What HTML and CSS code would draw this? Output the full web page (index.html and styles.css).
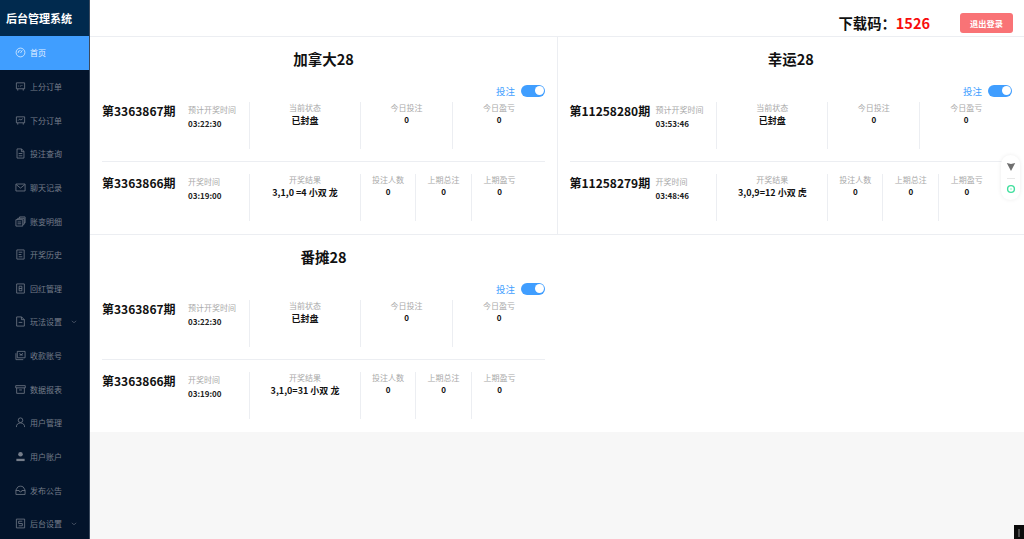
FILE: index.html
```html
<!DOCTYPE html>
<html lang="zh-CN">
<head>
<meta charset="utf-8">
<title>后台管理系统</title>
<link rel="stylesheet" href="styles.css">
</head>
<body>
<div class="app">
  <aside class="sidebar">
    <div class="logo">后台管理系统</div>
    <nav class="menu">
      <a class="item active"><svg class="ico" viewBox="0 0 12 12"><circle cx="6" cy="6" r="4.8"/><path d="M6 6.5 8 3.6M3.4 6.5a2.6 2.6 0 0 1 2.6-2.7"/></svg><span>首页</span></a>
      <a class="item"><svg class="ico" viewBox="0 0 12 12"><path d="M1.5 2h9v6.5h-9zM3 8.5V10.5M9 8.5V10.5M3.5 5.5h1M5.5 5.5h1M7.5 4.5v1"/></svg><span>上分订单</span></a>
      <a class="item"><svg class="ico" viewBox="0 0 12 12"><path d="M1.5 2h9v6.5h-9zM3 8.5V10.5M9 8.5V10.5M3.5 6l1.5-1.5 1.5 1 2-1.5"/></svg><span>下分订单</span></a>
      <a class="item"><svg class="ico" viewBox="0 0 12 12"><path d="M2.2 1h5l2.6 2.8V11H2.2zM7 1v3h2.8M4 6h4M4 8.5h4"/></svg><span>投注查询</span></a>
      <a class="item"><svg class="ico" viewBox="0 0 12 12"><path d="M1 2.2h10v7.6H1zM1.5 3 6 6.6 10.500 3"/></svg><span>聊天记录</span></a>
      <a class="item"><svg class="ico" viewBox="0 0 12 12"><path d="M1 4h7.500v7H1zM3 4V2.500h7V9H8.500M5 2.500V1h6v6.500h-1M2.800 6.500h4M2.800 8.500h4"/></svg><span>账变明细</span></a>
      <a class="item"><svg class="ico" viewBox="0 0 12 12"><path d="M2 1h8v10H2zM4 3.500h4M4 6h3M4 8.500h4"/></svg><span>开奖历史</span></a>
      <a class="item"><svg class="ico" viewBox="0 0 12 12"><path d="M1.800 1h8.400v10H1.800zM4.500 3.500h3v5h-3zM4.500 6h3"/></svg><span>回红管理</span></a>
      <a class="item"><svg class="ico" viewBox="0 0 12 12"><path d="M1.800 1h5.400l3 3v7H1.800zM7 1v3h3.200M4 7h4"/></svg><span>玩法设置</span><svg class="chev" viewBox="0 0 8 5"><path d="M1 1l3 2.500L7 1"/></svg></a>
      <a class="item"><svg class="ico" viewBox="0 0 12 12"><path d="M2.500 1.500h8.500v7H2.500zM1 3.500v7h8M5 3.500l1.700 2L8.500 3.500M4.800 5.500h3.800"/></svg><span>收款账号</span></a>
      <a class="item"><svg class="ico" viewBox="0 0 12 12"><path d="M.8 1.800h10.400v2.400H.8zM1.800 4.200v6h8.400v-6M4.500 6.500h3"/></svg><span>数据报表</span></a>
      <a class="item"><svg class="ico" viewBox="0 0 12 12"><circle cx="6" cy="3.500" r="2.500"/><path d="M1.500 11c0-2.800 1.800-4.500 4.500-4.500s4.500 1.700 4.500 4.500"/></svg><span>用户管理</span></a>
      <a class="item"><svg class="ico solid" viewBox="0 0 12 12"><circle cx="6" cy="3.500" r="2.500"/><path d="M1.500 8.500h9V11h-9z"/></svg><span>用户账户</span></a>
      <a class="item"><svg class="ico" viewBox="0 0 12 12"><path d="M1 5.500 3 2.200C4.800 1 7.200 1 9 2.200l2 3.300v4.800H1zM1 6h3.500a1.500 1.500 0 0 0 3 0H11"/></svg><span>发布公告</span></a>
      <a class="item"><svg class="ico" viewBox="0 0 12 12"><path d="M1.500 1.200h9v9.600h-9zM8 3.500H4V6h4v2.500H4"/></svg><span>后台设置</span><svg class="chev" viewBox="0 0 8 5"><path d="M1 1l3 2.500L7 1"/></svg></a>
    </nav>
  </aside>

  <main class="main">
    <header class="topbar">
      <div class="code">下载码：<b>1526</b></div>
      <button class="logout">退出登录</button>
    </header>

    <section class="cards">
      <article class="card edge">
        <h2 class="title">加拿大28</h2>
        <div class="bet"><span>投注</span><i class="switch"></i></div>
        <div class="row">
          <div class="left"><div class="period">第3363867期</div><div class="time"><small>预计开奖时间</small><strong>03:22:30</strong></div></div>
          <div class="cell mid"><small>当前状态</small><strong>已封盘</strong></div>
          <div class="stats two"><div class="cell"><small>今日投注</small><strong>0</strong></div><div class="cell"><small>今日盈亏</small><strong>0</strong></div></div>
        </div>
        <hr class="rule">
        <div class="row">
          <div class="left"><div class="period">第3363866期</div><div class="time"><small>开奖时间</small><strong>03:19:00</strong></div></div>
          <div class="cell mid"><small>开奖结果</small><strong>3,1,0 =4 小双 龙</strong></div>
          <div class="stats three"><div class="cell"><small>投注人数</small><strong>0</strong></div><div class="cell"><small>上期总注</small><strong>0</strong></div><div class="cell"><small>上期盈亏</small><strong>0</strong></div></div>
        </div>
      </article>

      <article class="card right">
        <h2 class="title">幸运28</h2>
        <div class="bet"><span>投注</span><i class="switch"></i></div>
        <div class="row">
          <div class="left"><div class="period">第11258280期</div><div class="time"><small>预计开奖时间</small><strong>03:53:46</strong></div></div>
          <div class="cell mid"><small>当前状态</small><strong>已封盘</strong></div>
          <div class="stats two"><div class="cell"><small>今日投注</small><strong>0</strong></div><div class="cell"><small>今日盈亏</small><strong>0</strong></div></div>
        </div>
        <hr class="rule">
        <div class="row">
          <div class="left"><div class="period">第11258279期</div><div class="time"><small>开奖时间</small><strong>03:48:46</strong></div></div>
          <div class="cell mid"><small>开奖结果</small><strong>3,0,9=12 小双 虎</strong></div>
          <div class="stats three"><div class="cell"><small>投注人数</small><strong>0</strong></div><div class="cell"><small>上期总注</small><strong>0</strong></div><div class="cell"><small>上期盈亏</small><strong>0</strong></div></div>
        </div>
      </article>

      <article class="card last">
        <h2 class="title">番摊28</h2>
        <div class="bet"><span>投注</span><i class="switch"></i></div>
        <div class="row">
          <div class="left"><div class="period">第3363867期</div><div class="time"><small>预计开奖时间</small><strong>03:22:30</strong></div></div>
          <div class="cell mid"><small>当前状态</small><strong>已封盘</strong></div>
          <div class="stats two"><div class="cell"><small>今日投注</small><strong>0</strong></div><div class="cell"><small>今日盈亏</small><strong>0</strong></div></div>
        </div>
        <hr class="rule">
        <div class="row">
          <div class="left"><div class="period">第3363866期</div><div class="time"><small>开奖时间</small><strong>03:19:00</strong></div></div>
          <div class="cell mid"><small>开奖结果</small><strong>3,1,0=31 小双 龙</strong></div>
          <div class="stats three"><div class="cell"><small>投注人数</small><strong>0</strong></div><div class="cell"><small>上期总注</small><strong>0</strong></div><div class="cell"><small>上期盈亏</small><strong>0</strong></div></div>
        </div>
      </article>
      <div class="blank"></div>
    </section>
  </main>
</div>

<div class="float">
  <svg class="f-arrow" viewBox="0 0 10 10"><path d="M.8 1 5 2l4.200-1L5 9z"/></svg>
  <span class="f-line"></span>
  <svg class="f-target" viewBox="0 0 10 10"><circle cx="5" cy="5" r="3.400"/><circle class="dot" cx="5" cy="5" r="1"/></svg>
</div>
<div class="corner"></div>
</body>
</html>
```

FILE: styles.css
```css
* { box-sizing: border-box; }
html, body { margin: 0; height: 100%; overflow: hidden; }
body {
  font-family: "Noto Sans CJK SC", "Noto Sans", sans-serif;
  background: #f7f7f7;
  color: #111;
}
.app { display: flex; height: 539px; }

.sidebar { width: 90px; flex: none; background: #03142b; border-right: 1px solid #3b4a5e; overflow: hidden; }
.logo {
  height: 36px;
  background: #012a4e;
  color: #fff;
  font-size: 11px;
  font-weight: 700;
  line-height: 36px;
  padding-left: 6px;
  white-space: nowrap;
}
.menu { display: flex; flex-direction: column; }
.item {
  height: 33.650px;
  flex: none;
  display: flex;
  align-items: center;
  padding-left: 14.500px;
  color: #757d8a;
  font-size: 8px;
}
.item span { margin-left: 4.500px; white-space: nowrap; }
.item.active { background: #409eff; color: #e4f1ff; }
.ico { width: 11px; height: 11px; flex: none; fill: none; stroke: currentColor; stroke-width: .85; }
.ico.solid { fill: currentColor; stroke: none; }
.chev { width: 6px; height: 4px; margin-left: 9px; fill: none; stroke: #5c6675; stroke-width: .9; }

.main { flex: 1; min-width: 0; display: flex; flex-direction: column; }
.topbar {
  height: 37px;
  background: #fff;
  border-bottom: 1px solid #eceef2;
  display: flex;
  align-items: flex-start;
  justify-content: flex-end;
  padding-right: 11px;
}
.code { font-size: 14.300px; font-weight: 700; color: #111; line-height: 20px; margin-top: 13px; white-space: nowrap; }
.code b { color: #f80c0c; font-weight: 700; font-size: 14.500px; }
.logout {
  width: 53px;
  height: 20px;
  margin-left: 30px;
  margin-top: 13px;
  padding: 0;
  border: 0;
  border-radius: 3px;
  background: #f97376;
  color: #fff;
  font: 700 8.200px "Noto Sans CJK SC", sans-serif;
}

.cards { display: grid; grid-template-columns: 467.500px 466.500px; background: #fff; }
.card {
  background: #fff;
  padding: 0 12px 13px;
  border-bottom: 1px solid #eceef2;
  height: 198px;
}
.card.edge { border-right: 1px solid #eceef2; padding-right: 11.500px; }
.card.last { border-bottom: 0; height: 197px; padding-right: 12.500px; }
.blank { background: #fff; }
.title { margin: 0; height: 46px; font-size: 14.500px; font-weight: 700; line-height: 44px; text-align: center; }
.bet { height: 15px; margin-bottom: 4px; display: flex; justify-content: flex-end; align-items: center; color: #409eff; font-size: 9.500px; }
.switch { position: relative; width: 24px; height: 12px; margin-left: 6px; border-radius: 6px; background: #409eff; }
.switch::after { content: ""; position: absolute; top: 1.500px; right: 1.500px; width: 9px; height: 9px; border-radius: 50%; background: #fff; }

.row { display: grid; grid-template-columns: 147px 111px 1fr; height: 47px; }
.card.right .row { grid-template-columns: 146.800px 111px 1fr; }
.left { display: flex; }
.period { width: 86px; font-size: 12px; font-weight: 700; line-height: 18px; white-space: nowrap; }
.time small, .cell small { display: block; color: #a9a9a9; font-size: 8px; line-height: 12px; white-space: nowrap; }
.time small { margin-top: 2px; }
.time strong { display: block; font-size: 8px; font-weight: 700; line-height: 15px; color: #222; }
.cell { border-left: 1px solid #eceef2; text-align: center; }
.cell strong { display: block; font-size: 9px; font-weight: 700; line-height: 12px; color: #111; }
.cell.mid strong { margin-top: 1px; }
.stats { display: grid; }
.stats.two { grid-template-columns: 92px 1fr; }
.stats.three { grid-template-columns: 55px 56px 56px; }
.stats strong { font-size: 8px; }
.rule { margin: 12px 0; height: 1px; border: 0; background: #eceef2; }

.float {
  position: fixed;
  left: 1001px;
  top: 155px;
  width: 19px;
  height: 45px;
  border-radius: 10px;
  background: #fff;
  box-shadow: 0 0 4px rgba(0, 0, 0, .08);
  display: flex;
  flex-direction: column;
  align-items: center;
  padding-top: 7px;
}
.f-arrow { width: 10px; height: 10px; fill: #6f6f6f; }
.f-line { width: 8px; height: 1px; margin: 6px 0 5px; background: #e8e8e8; }
.f-target { width: 10px; height: 10px; fill: none; stroke: #3fdf9d; stroke-width: 1.400; }
.f-target .dot { fill: #b5f3d8; stroke: none; }
.corner { position: fixed; left: 1014px; top: 525px; width: 10px; height: 14px; background: #0b0b0b; }
.corner::after { content: ""; position: absolute; left: 4px; top: 4px; width: 1.500px; height: 8px; background: #4a4a4a; }
```
